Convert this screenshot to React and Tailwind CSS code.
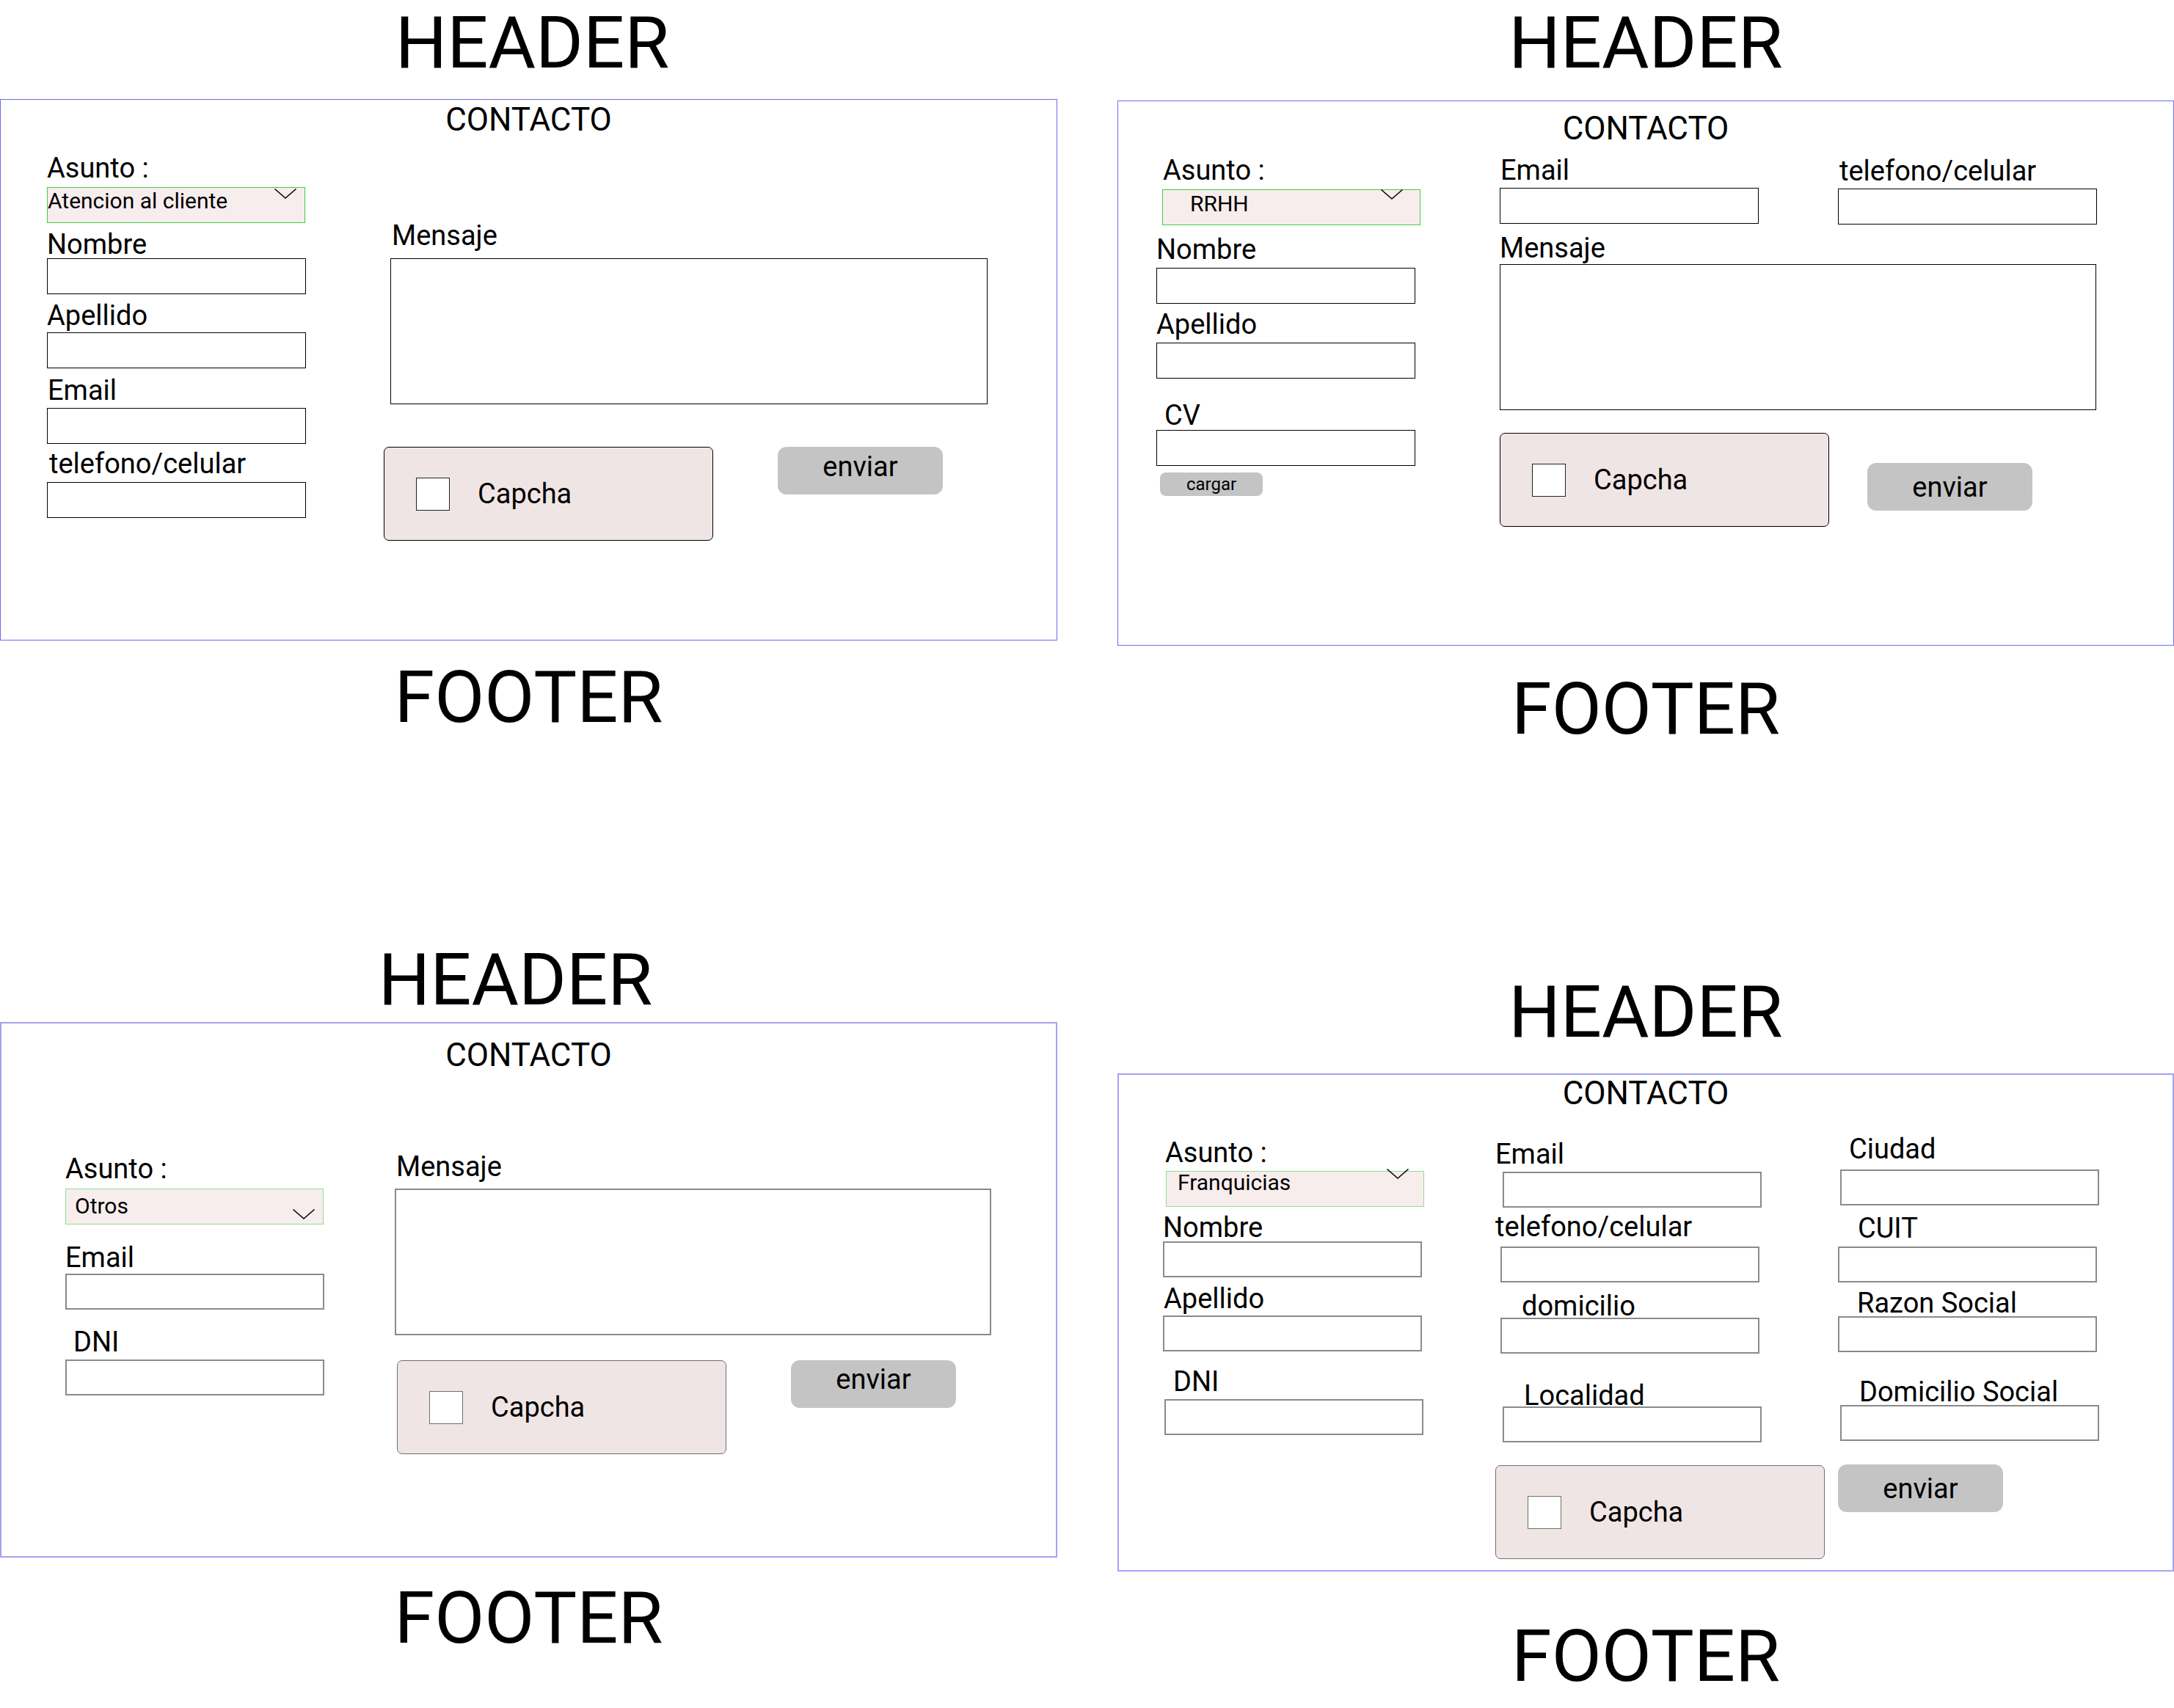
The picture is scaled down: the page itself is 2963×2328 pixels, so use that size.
const Label = ({ className = '', children }) => (
  <p className={`whitespace-nowrap text-[38px] leading-none ${className}`}>{children}</p>
)

// plain text box of the wireframe; "soft" = the grey bordered variant of the lower panels
const Input = ({ className = '', soft = false }) => (
  <div
    className={`h-[49px] w-[353px] shrink-0 bg-white ${soft ? 'border-2 border-[#8a8a8a]' : 'border border-black'} ${className}`}
  />
)

const Chevron = ({ className = '' }) => (
  <svg
    className={`absolute h-[14px] w-[30px] ${className}`}
    viewBox="0 0 30 14"
    fill="none"
    stroke="black"
    strokeWidth="1.5"
  >
    <path d="M0.5 0.5L15 13L29.5 0.5" />
  </svg>
)

const Select = ({ value, className = '', textClass = '', chevronClass = '' }) => (
  <div className={`relative h-[49px] w-[352px] shrink-0 border bg-[#f8eded] ${className}`}>
    <p className={`whitespace-nowrap text-[30px] leading-none ${textClass}`}>{value}</p>
    <Chevron className={chevronClass} />
  </div>
)

const Captcha = ({ className = '', soft = false }) => (
  <div
    className={`flex h-[128px] w-[449px] shrink-0 items-center rounded-[7px] border bg-[#f0e5e5] pl-[43px] ${soft ? 'border-[#6f6f6f]' : 'border-black'} ${className}`}
  >
    <span className={`h-[45px] w-[46px] border bg-white ${soft ? 'border-[#6f6f6f]' : 'border-[#222]'}`} />
    <span className="ml-[38px] text-[38px] leading-none">Capcha</span>
  </div>
)

const Send = ({ className = '' }) => (
  <button
    type="button"
    className={`flex h-[65px] w-[225px] shrink-0 items-center justify-center rounded-[12px] bg-[#c4c4c4] text-[38px] leading-none ${className}`}
  >
    enviar
  </button>
)

const Title = ({ className = '', children }) => (
  <p className={`text-center text-[99px] leading-none ${className}`}>{children}</p>
)

const Contacto = ({ className = '' }) => (
  <h2 className={`text-center text-[44px] leading-none ${className}`}>CONTACTO</h2>
)

const ClientePanel = () => (
  <section className="mt-[27px] h-[738px] border border-[#6b6bf0]">
    <Contacto className="mt-[5px]" />
    <div className="flex pl-[63px]">
      <div className="flex w-[353px] flex-col">
        <Label className="mt-[25px]">Asunto :</Label>
        <Select
          className="mt-[7px] border-[#45cc45]"
          textClass="pt-[3px]"
          chevronClass="right-[11px] top-[1px]"
          value="Atencion al cliente"
        />
        <Label className="mt-[10px]">Nombre</Label>
        <Input />
        <Label className="mt-[10px]">Apellido</Label>
        <Input className="mt-[4px]" />
        <Label className="mt-[11px] pl-px">Email</Label>
        <Input className="mt-[5px]" />
        <Label className="mt-[8px] pl-[3px]">telefono/celular</Label>
        <Input className="mt-[6px]" />
      </div>
      <div className="ml-[115px] flex w-[814px] flex-col">
        <Label className="mt-[117px] pl-[2px]">Mensaje</Label>
        <div className="mt-[12px] h-[199px] border border-black" />
        <div className="mt-[58px] flex items-start">
          <Captcha className="-ml-[9px]" />
          <Send className="ml-[88px] pb-[11px]" />
        </div>
      </div>
    </div>
  </section>
)

const RrhhPanel = () => (
  <section className="mt-[29px] h-[743px] border border-[#6b6bf0]">
    <Contacto className="mt-[15px]" />
    <div className="flex pl-[52px]">
      <div className="flex w-[353px] flex-col">
        <Label className="mt-[16px] pl-[9px]">Asunto :</Label>
        <Select
          className="ml-[8px] mt-[7px] border-[#45cc45]"
          textClass="pl-[37px] pt-[4px]"
          chevronClass="right-[23px] -top-px"
          value="RRHH"
        />
        <Label className="mt-[14px]">Nombre</Label>
        <Input className="mt-[6px]" />
        <Label className="mt-[9px]">Apellido</Label>
        <Input className="mt-[6px]" />
        <Label className="mt-[31px] pl-[11px]">CV</Label>
        <Input className="mt-px" />
        <button
          type="button"
          className="ml-[5px] mt-[9px] h-[32px] w-[140px] rounded-[8px] bg-[#c4c4c4] text-[24px] leading-none"
        >
          cargar
        </button>
      </div>
      <div className="ml-[115px] flex w-[813px] flex-col">
        <div className="flex items-start">
          <div className="flex w-[353px] flex-col">
            <Label className="mt-[16px] pl-px">Email</Label>
            <Input className="mt-[5px]" />
          </div>
          <div className="ml-[108px] flex w-[353px] flex-col">
            <Label className="mt-[17px] pl-[2px]">telefono/celular</Label>
            <Input className="mt-[5px]" />
          </div>
        </div>
        <Label className="mt-[13px]">Mensaje</Label>
        <div className="mt-[3px] h-[199px] border border-black" />
        <div className="mt-[31px] flex items-start">
          <Captcha />
          <Send className="ml-[52px] mt-[41px]" />
        </div>
      </div>
    </div>
  </section>
)

const OtrosPanel = () => (
  <section className="mt-[8px] h-[730px] border-2 border-[#a3a3f4]">
    <Contacto className="mt-[21px]" />
    <div className="flex pl-[87px]">
      <div className="flex w-[352px] flex-col">
        <Label className="mt-[114px]">Asunto :</Label>
        <Select
          className="mt-[8px] border-[#8fdf8f]"
          textClass="pl-[12px] pt-[8px]"
          chevronClass="right-[11px] top-[27px]"
          value="Otros"
        />
        <Label className="mt-[26px]">Email</Label>
        <Input soft className="mt-[3px] w-[352px]" />
        <Label className="mt-[25px] pl-[11px]">DNI</Label>
        <Input soft className="mt-[5px] w-[352px]" />
      </div>
      <div className="ml-[97px] flex w-[813px] flex-col">
        <Label className="mt-[111px] pl-[2px]">Mensaje</Label>
        <div className="mt-[11px] h-[200px] border-2 border-[#8a8a8a]" />
        <div className="mt-[34px] flex items-start">
          <Captcha soft className="ml-[3px]" />
          <Send className="ml-[88px] pb-[14px]" />
        </div>
      </div>
    </div>
  </section>
)

const FranquiciasPanel = () => (
  <section className="mt-[34px] h-[679px] border-2 border-[#a3a3f4]">
    <Contacto className="mt-[3px]" />
    <div className="flex pl-[60px]">
      <div className="flex w-[356px] flex-col">
        <Label className="mt-[40px] pl-[3px]">Asunto :</Label>
        <Select
          className="ml-[4px] mt-[6px] border-[#8fdf8f]"
          textClass="pl-[15px]"
          chevronClass="right-[20px] -top-[4px]"
          value="Franquicias"
        />
        <Label className="mt-[9px]">Nombre</Label>
        <Input soft />
        <Label className="mt-[10px] pl-px">Apellido</Label>
        <Input soft className="mt-[4px]" />
        <Label className="mt-[22px] pl-[14px]">DNI</Label>
        <Input soft className="ml-[2px] mt-[5px]" />
      </div>
      <div className="ml-[97px] flex w-[449px] flex-col">
        <Label className="mt-[42px]">Email</Label>
        <Input soft className="ml-[10px] mt-[5px]" />
        <Label className="mt-[7px]">telefono/celular</Label>
        <Input soft className="ml-[7px] mt-[8px]" />
        <Label className="mt-[13px] pl-[36px]">domicilio</Label>
        <Input soft className="ml-[7px] -mt-[3px]" />
        <Label className="mt-[38px] pl-[39px]">Localidad</Label>
        <Input soft className="ml-[10px] -mt-[4px]" />
        <Captcha soft className="mt-[31px]" />
      </div>
      <div className="ml-[18px] flex w-[356px] flex-col">
        <Label className="mt-[35px] pl-[15px]">Ciudad</Label>
        <Input soft className="ml-[3px] mt-[9px]" />
        <Label className="mt-[12px] pl-[27px]">CUIT</Label>
        <Input soft className="mt-[6px]" />
        <Label className="mt-[9px] pl-[26px]">Razon Social</Label>
        <Input soft className="-mt-px" />
        <Label className="mt-[35px] pl-[29px]">Domicilio Social</Label>
        <Input soft className="ml-[3px] -mt-px" />
        <Send className="mt-[32px]" />
      </div>
    </div>
  </section>
)

export default function App() {
  return (
    <div className="flex h-[2328px] w-[2963px] overflow-hidden bg-white font-[Roboto,sans-serif] text-black">
      <div className="flex w-[1441px] shrink-0 flex-col">
        <Title className="mt-[9px] pl-[10px]">HEADER</Title>
        <ClientePanel />
        <Title className="mt-[28px]">FOOTER</Title>
        <Title className="mt-[286px] pr-[36px]">HEADER</Title>
        <OtrosPanel />
        <Title className="mt-[33px]">FOOTER</Title>
      </div>
      <div className="ml-[82px] flex w-[1440px] shrink-0 flex-col">
        <Title className="mt-[9px]">HEADER</Title>
        <RrhhPanel />
        <Title className="mt-[37px]">FOOTER</Title>
        <Title className="mt-[314px]">HEADER</Title>
        <FranquiciasPanel />
        <Title className="mt-[66px]">FOOTER</Title>
      </div>
    </div>
  )
}
